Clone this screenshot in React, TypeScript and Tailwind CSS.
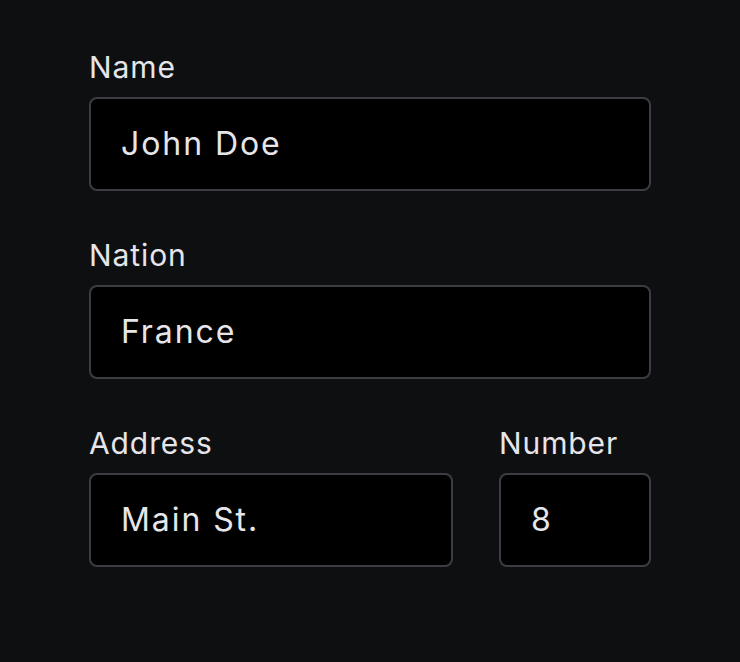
import React from 'react';

const Field: React.FC<{ label: string; value: string; className?: string }> = ({ label, value, className }) => (
    <div className={`flex flex-col ${className ?? ''}`}>
        <label className="h-[34px] text-[30px] leading-[34px] tracking-[0.03em] text-[#e6e6ea]">{label}</label>
        <div className="mt-[13px] h-[94px] flex items-center rounded-lg border-2 border-[#3b3d43] bg-black pl-[30px] text-[32px] tracking-[0.06em] text-[#e6e6ea]">
            {value}
        </div>
    </div>
);

const App: React.FC = () => {
    return (
        <div className="h-[662px] w-[740px] bg-[#0e0f11] pt-[50px] pl-[89px] font-['Inter','Liberation_Sans',sans-serif]">
            <div className="flex w-[562px] flex-col gap-[47px]">
                <Field label="Name" value="John Doe" />
                <Field label="Nation" value="France" />
                <div className="flex gap-[46px]">
                    <Field label="Address" value="Main St." className="w-[364px]" />
                    <Field label="Number" value="8" className="w-[152px]" />
                </div>
            </div>
        </div>
    );
};

export default App;
